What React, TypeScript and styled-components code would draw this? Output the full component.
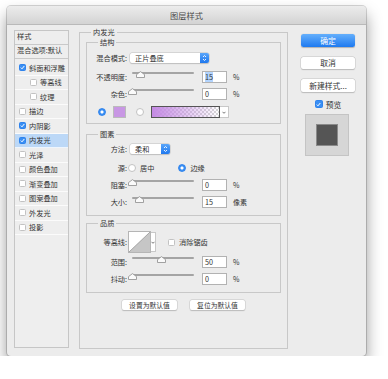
import { FC, ReactNode } from "react";
import styled, { createGlobalStyle } from "styled-components";

const Global = createGlobalStyle`
  body {
    margin: 0;
    background: #fff;
    font-family: "Noto Sans CJK SC", "Noto Sans", sans-serif;
    color: #333;
  }
`

const Win = styled.div`
  margin: 6px 0 0 7px;
  width: 359px;
  height: 350px;
  background: #ececec;
  border-radius: 4px;
  box-shadow: 0 0 0 1px rgba(0, 0, 0, 0.16), 0 9px 16px rgba(0, 0, 0, 0.42);
  overflow: hidden;
  display: flex;
  flex-direction: column;
`
const TitleBar = styled.div`
  height: 19px;
  flex: none;
  box-sizing: border-box;
  background: linear-gradient(#ececec, #d3d3d3);
  border-bottom: 1px solid #b9b9b9;
  font-size: 8.2px;
  line-height: 18px;
  text-align: center;
  color: #4a4a4a;
`
const Body = styled.div`
  display: flex;
  align-items: flex-start;
  padding: 2px 11px 0 7px;
`

/* left list */
const Side = styled.div`
  margin-top: 3px;
  width: 55px;
  height: 318px;
  box-sizing: border-box;
  border: 1px solid #c6c6c6;
  background: #eeeeee;
  font-size: 7.2px;
  flex: none;
`
const SideHead = styled.div`
  height: 14px;
  box-sizing: border-box;
  border-bottom: 1px solid #c9c9c9;
  padding-left: 2px;
  line-height: 11px;
`
const SideList = styled.div`
  padding-top: 2px;
`
const SideRow = styled.div<{ $active?: boolean; $sub?: boolean }>`
  height: 14.5px;
  box-sizing: border-box;
  display: flex;
  align-items: center;
  gap: 3px;
  padding-left: ${(p) => (p.$sub ? 15 : 4)}px;
  background: ${(p) => (p.$active ? "#bcd8f7" : "transparent")};
  border-bottom: 1px solid rgba(255, 255, 255, 0.75);
`
const Box = styled.span<{ $on?: boolean; $size?: number }>`
  width: ${(p) => p.$size || 7}px;
  height: ${(p) => p.$size || 7}px;
  box-sizing: border-box;
  flex: none;
  border-radius: 1.5px;
  border: 1px solid ${(p) => (p.$on ? "#2f83ec" : "#c2c2c2")};
  background: ${(p) => (p.$on ? "#3a8ff4" : "#fff")};
  display: flex;
  align-items: center;
  justify-content: center;
`

/* main groups */
const Group = styled.fieldset<{ $h?: number; $mt?: number; $pb?: number }>`
  margin: ${(p) => p.$mt || 0}px 0 0;
  padding: 0 0 ${(p) => p.$pb || 0}px;
  border: 1px solid #c8c8c8;
  min-width: 0;
  ${(p) => (p.$h ? `height:${p.$h}px;` : "")}
  box-sizing: border-box;
`
const Main = styled(Group)`
  width: 209px;
  flex: none;
  padding: 0 6px;
  margin-left: 10px;
`
const Legend = styled.legend<{ $ml: number }>`
  font-size: 7.2px;
  line-height: 10px;
  padding: 0 2px;
  margin-left: ${(p) => p.$ml}px;
`
const Row = styled.div<{ $h: number; $mt: number }>`
  display: flex;
  align-items: center;
  height: ${(p) => p.$h}px;
  margin-top: ${(p) => p.$mt}px;
  font-size: 7.2px;
`
const Label = styled.span`
  width: 40px;
  flex: none;
  text-align: right;
  white-space: nowrap;
`
const Select = styled.div<{ $w: number }>`
  margin-left: 3px;
  width: ${(p) => p.$w}px;
  height: 10px;
  box-sizing: border-box;
  background: #fff;
  border-radius: 2px;
  box-shadow: 0 0 0 0.5px #c4c4c4, 0 0.5px 1px rgba(0, 0, 0, 0.2);
  display: flex;
  align-items: center;
  justify-content: space-between;
  padding-left: 5px;
  line-height: 10px;
  overflow: hidden;
`
const Stepper = styled.span`
  width: 9px;
  height: 10px;
  background: linear-gradient(#5aa6fa, #1f78ee);
  display: flex;
  align-items: center;
  justify-content: center;
`
const Track = styled.div<{ $ml?: number }>`
  position: relative;
  width: 62px;
  height: 12px;
  flex: none;
  margin-left: ${(p) => (p.$ml ?? 5)}px;
  &::before {
    content: "";
    position: absolute;
    left: 0;
    right: 0;
    top: 1px;
    height: 2px;
    border-radius: 1px;
    background: #a4a4a4;
  }
`
const Thumb = styled.svg`
  position: absolute;
  top: 0;
  margin-left: -4.5px;
`
const Field = styled.div`
  margin-left: 8px;
  width: 25px;
  height: 12px;
  box-sizing: border-box;
  border: 1px solid #b2b2b2;
  background: #fff;
  padding-left: 2px;
  line-height: 10px;
  flex: none;
`
const Sel = styled.span`
  background: #b3d4fd;
`
const Unit = styled.span`
  margin-left: 6px;
  font-size: 7px;
`
const Radio = styled.span<{ $on?: boolean; $ml: number }>`
  margin-left: ${(p) => p.$ml}px;
  width: 8px;
  height: 8px;
  flex: none;
  box-sizing: border-box;
  border-radius: 50%;
  border: 1px solid ${(p) => (p.$on ? "#2f83ec" : "#c2c2c2")};
  background: ${(p) => (p.$on ? "radial-gradient(circle, #fff 0 1.3px, #3a8ff4 1.8px)" : "#fff")};
`
const Swatch = styled.span`
  margin-left: 7px;
  width: 13px;
  height: 12px;
  box-sizing: border-box;
  border: 1px solid #bbb;
  background: #c897e4;
`
const Gradient = styled.span`
  margin-left: 7px;
  width: 69px;
  height: 12px;
  box-sizing: border-box;
  border: 1px solid #555;
  background: linear-gradient(to right, rgba(196, 138, 228, 1), rgba(196, 138, 228, 0)),
    repeating-conic-gradient(#d6d6d6 0 25%, #fff 0 50%) 0 0 / 4px 4px;
`
const Drop = styled.span<{ $w: number; $h: number }>`
  width: ${(p) => p.$w}px;
  height: ${(p) => p.$h}px;
  box-sizing: border-box;
  background: #fff;
  border: 1px solid #c8c8c8;
  border-left: none;
  display: flex;
  align-items: center;
  justify-content: center;
`
const Text = styled.span<{ $ml: number }>`
  margin-left: ${(p) => p.$ml}px;
`
const Contour = styled.svg`
  margin-left: 1px;
  flex: none;
  border: 1px solid #b5b5b5;
  background: #fff;
`
const Buttons = styled.div`
  display: flex;
  justify-content: center;
  gap: 13px;
  margin-top: 7px;
`
const SmallBtn = styled.div`
  width: 55px;
  height: 10px;
  background: #fff;
  border-radius: 2px;
  box-shadow: 0 0 0 0.5px #c8c8c8, 0 0.5px 1px rgba(0, 0, 0, 0.25);
  font-size: 6.8px;
  line-height: 10px;
  text-align: center;
`

/* right column */
const Right = styled.div`
  margin-left: 13px;
  width: 54px;
  flex: none;
  display: flex;
  flex-direction: column;
  font-size: 7.8px;
`
const Btn = styled.div<{ $primary?: boolean; $h: number; $mt: number }>`
  height: ${(p) => p.$h}px;
  margin-top: ${(p) => p.$mt}px;
  border-radius: 2.5px;
  line-height: ${(p) => p.$h}px;
  text-align: center;
  color: ${(p) => (p.$primary ? "#fff" : "#333")};
  background: ${(p) => (p.$primary ? "linear-gradient(#64affc, #1e7af0)" : "#fff")};
  box-shadow: ${(p) =>
    p.$primary ? "0 0.5px 1px rgba(0,0,0,0.25)" : "0 0 0 0.5px #c8c8c8, 0 0.5px 1px rgba(0,0,0,0.25)"};
`
const Preview = styled.div`
  margin-top: 7px;
  height: 10px;
  display: flex;
  align-items: center;
  justify-content: center;
  gap: 3px;
`
const PreviewBox = styled.div`
  margin: 5px 0 0 4px;
  width: 44px;
  height: 42px;
  box-sizing: border-box;
  background: #d6d6d6;
  border: 1px solid #c4c4c4;
  display: flex;
  align-items: center;
  justify-content: center;
`
const PreviewSq = styled.div`
  width: 22px;
  height: 22px;
  box-sizing: border-box;
  background: #555;
  border: 1px solid #8a8a8a;
`

const Check = () => (
  <svg width="5" height="5" viewBox="0 0 5 5">
    <path d="M0.8 2.6 L2 3.8 L4.3 1" fill="none" stroke="#fff" strokeWidth="1" />
  </svg>
)

const Updown = () => (
  <svg width="5" height="8" viewBox="0 0 5 8">
    <path d="M1 3 L2.5 1.5 L4 3 M1 5 L2.5 6.5 L4 5" fill="none" stroke="#fff" strokeWidth="0.9" />
  </svg>
)

const Caret = () => (
  <svg width="4" height="3" viewBox="0 0 4 3">
    <path d="M0.5 0.8 L2 2.3 L3.5 0.8" fill="none" stroke="#555" strokeWidth="0.8" />
  </svg>
)

const Slider: FC<{ value: number; ml?: number }> = ({ value, ml }) => (
  <Track $ml={ml}>
    <Thumb width="9" height="7" viewBox="0 0 9 7" style={{ left: `${(value / 100) * 62}px` }}>
      <path d="M0.5 6.5 L0.5 3.6 L4.5 0.6 L8.5 3.6 L8.5 6.5 Z" fill="#fafafa" stroke="#8c8c8c" strokeWidth="0.8" />
    </Thumb>
  </Track>
)

const SliderRow: FC<{ label: string; value: number; field: ReactNode; unit: string; mt: number }> = ({
  label,
  value,
  field,
  unit,
  mt,
}) => (
  <Row $h={12} $mt={mt}>
    <Label>{label}</Label>
    <Slider value={value} />
    <Field>{field}</Field>
    <Unit>{unit}</Unit>
  </Row>
)

const items = [
  { label: "斜面和浮雕", on: true },
  { label: "等高线", sub: true },
  { label: "纹理", sub: true },
  { label: "描边" },
  { label: "内阴影", on: true },
  { label: "内发光", on: true, active: true },
  { label: "光泽" },
  { label: "颜色叠加" },
  { label: "渐变叠加" },
  { label: "图案叠加" },
  { label: "外发光" },
  { label: "投影" },
]

const App: FC = () => {
  return (
    <>
      <Global />
      <Win>
        <TitleBar>图层样式</TitleBar>
        <Body>
          <Side>
            <SideHead>样式</SideHead>
            <SideHead>混合选项:默认</SideHead>
            <SideList>
              {items.map((it) => (
                <SideRow key={it.label} $active={it.active} $sub={it.sub}>
                  <Box $on={it.on}>{it.on && <Check />}</Box>
                  <span>{it.label}</span>
                </SideRow>
              ))}
            </SideList>
          </Side>

          <Main $h={322}>
            <Legend $ml={5}>内发光</Legend>

            <Group $pb={5}>
              <Legend $ml={11}>结构</Legend>
              <Row $h={10} $mt={6}>
                <Label>混合模式:</Label>
                <Select $w={79}>
                  正片叠底
                  <Stepper>
                    <Updown />
                  </Stepper>
                </Select>
              </Row>
              <SliderRow label="不透明度:" value={13} field={<Sel>15</Sel>} unit="%" mt={8} />
              <SliderRow label="杂色:" value={0} field="0" unit="%" mt={5} />
              <Row $h={12} $mt={6}>
                <Radio $on $ml={11} />
                <Swatch />
                <Radio $ml={10} />
                <Gradient />
                <Drop $w={9} $h={12}>
                  <Caret />
                </Drop>
              </Row>
            </Group>

            <Group $mt={5} $pb={7}>
              <Legend $ml={11}>图素</Legend>
              <Row $h={10} $mt={5}>
                <Label>方法:</Label>
                <Select $w={40}>
                  柔和
                  <Stepper>
                    <Updown />
                  </Stepper>
                </Select>
              </Row>
              <Row $h={10} $mt={9}>
                <Label>源:</Label>
                <Radio $ml={1} />
                <Text $ml={4}>居中</Text>
                <Radio $on $ml={24} />
                <Text $ml={4}>边缘</Text>
              </Row>
              <SliderRow label="阻塞:" value={0} field="0" unit="%" mt={6} />
              <SliderRow label="大小:" value={12} field="15" unit="像素" mt={5} />
            </Group>

            <Group $mt={2} $pb={7}>
              <Legend $ml={11}>品质</Legend>
              <Row $h={20} $mt={4}>
                <Label>等高线:</Label>
                <Contour width="21" height="20" viewBox="0 0 19 18">
                  <path d="M0 18 L19 0 L19 18 Z" fill="#c6c6c6" />
                  <path d="M0 18 L19 0" stroke="#888" strokeWidth="0.6" />
                </Contour>
                <Drop $w={5} $h={20}>
                  <Caret />
                </Drop>
                <Box style={{ marginLeft: 12 }} />
                <Text $ml={4}>消除锯齿</Text>
              </Row>
              <SliderRow label="范围:" value={48} field="50" unit="%" mt={4} />
              <SliderRow label="抖动:" value={0} field="0" unit="%" mt={5} />
            </Group>

            <Buttons>
              <SmallBtn>设置为默认值</SmallBtn>
              <SmallBtn>复位为默认值</SmallBtn>
            </Buttons>
          </Main>

          <Right>
            <Btn $primary $h={13} $mt={7}>
              确定
            </Btn>
            <Btn $h={12} $mt={10}>
              取消
            </Btn>
            <Btn $h={13} $mt={10}>
              新建样式...
            </Btn>
            <Preview>
              <Box $on $size={8}>
                <Check />
              </Box>
              <span>预览</span>
            </Preview>
            <PreviewBox>
              <PreviewSq />
            </PreviewBox>
          </Right>
        </Body>
      </Win>
    </>
  )
}

export default App
